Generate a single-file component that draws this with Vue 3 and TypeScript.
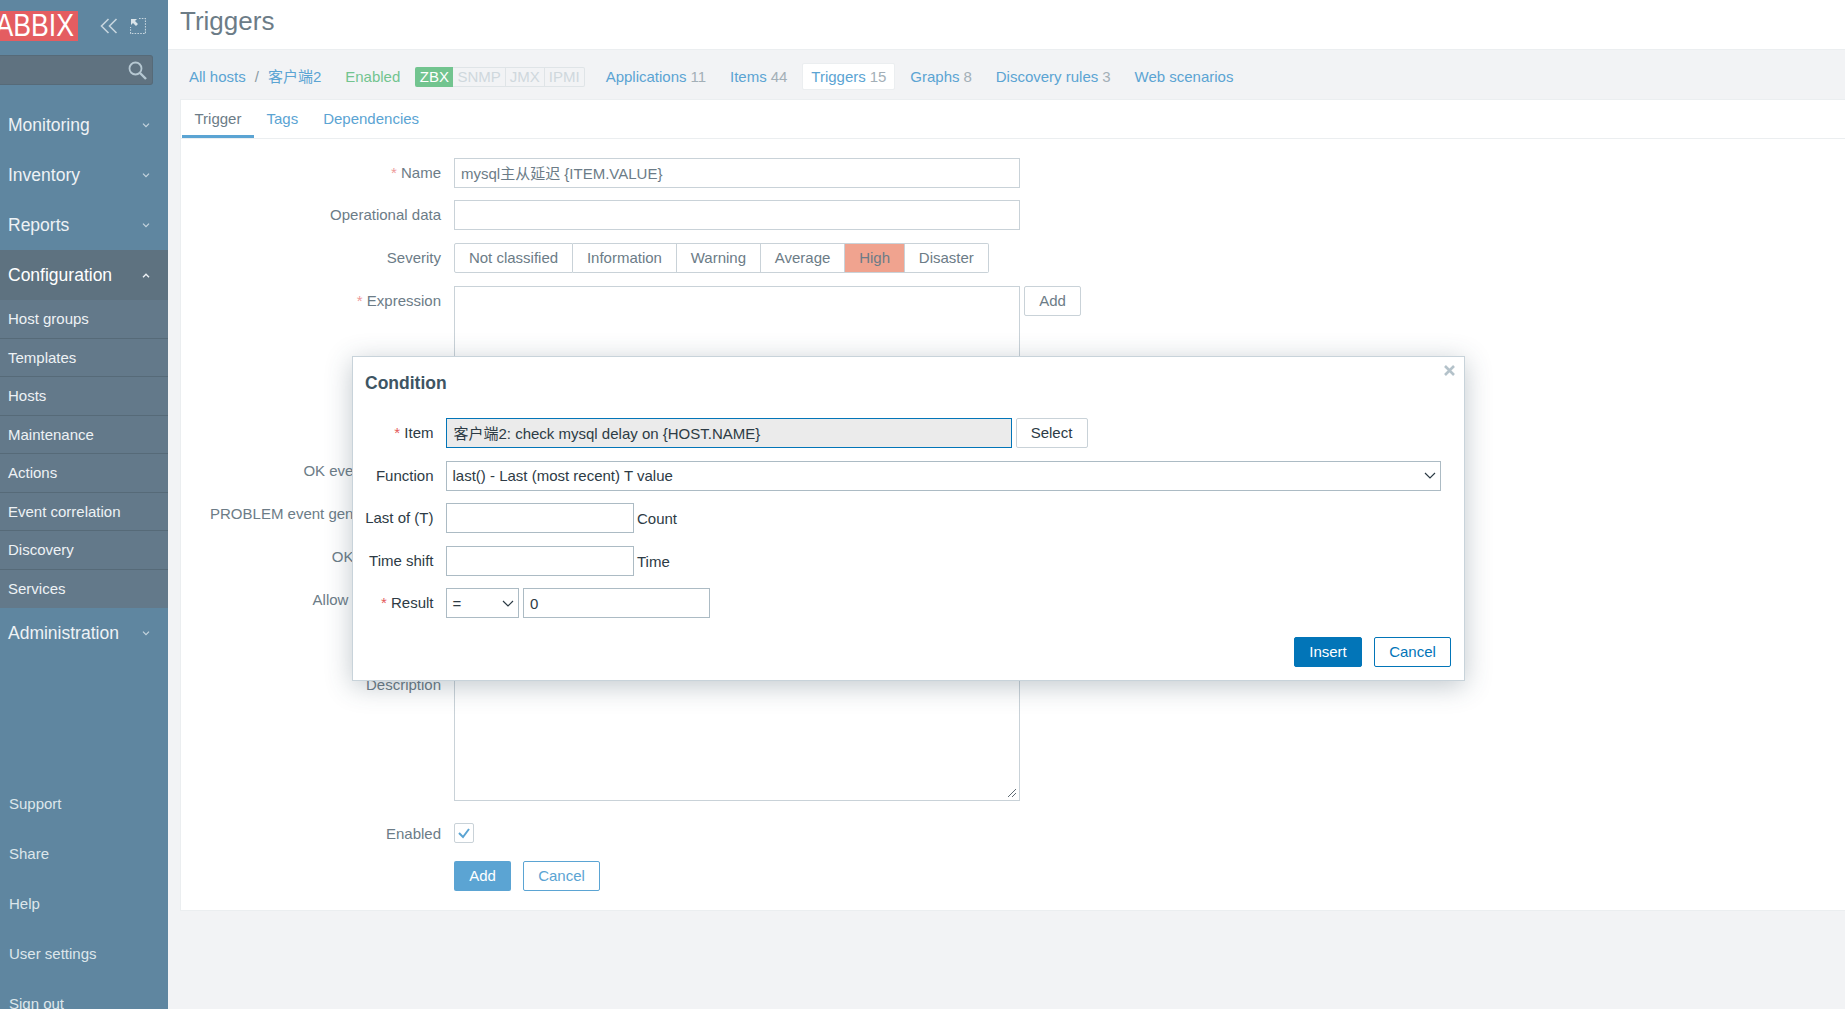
<script setup lang="ts">
const mainMenu = ['Monitoring', 'Inventory', 'Reports']
const subMenu = ['Host groups', 'Templates', 'Hosts', 'Maintenance', 'Actions', 'Event correlation', 'Discovery', 'Services']
const bottomMenu = ['Support', 'Share', 'Help', 'User settings', 'Sign out']
const hostNav = [
  { name: 'Applications', count: '11', active: false },
  { name: 'Items', count: '44', active: false },
  { name: 'Triggers', count: '15', active: true },
  { name: 'Graphs', count: '8', active: false },
  { name: 'Discovery rules', count: '3', active: false },
  { name: 'Web scenarios', count: '', active: false },
]
const severities = ['Not classified', 'Information', 'Warning', 'Average', 'High', 'Disaster']
</script>

<template>
  <div class="page">
    <aside class="sidebar">
      <div class="brand">
        <div class="logo"><span class="logo-text">ZABBIX</span></div>
        <svg class="collapse" width="18" height="16" viewBox="0 0 18 16" fill="none" stroke="#c6d5de" stroke-width="1.6">
          <path d="M8.5 1 1.5 8l7 7M16.5 1l-7 7 7 7" />
        </svg>
        <svg class="expand" width="16" height="16" viewBox="0 0 16 16" fill="none" stroke="#c6d5de">
          <path d="M9 .5h6.5V15.500H.5V9" stroke-dasharray="1.600 1.200" stroke-width="1.200" />
          <path d="M1 1h6L5 3l3 3-2 2-3-3-2 2z" fill="#dbe5ea" stroke="none" />
        </svg>
      </div>
      <div class="search">
        <svg width="19" height="19" viewBox="0 0 19 19" fill="none" stroke="#b6c8d2">
          <circle cx="7.500" cy="7.500" r="6" stroke-width="1.800" />
          <path d="m12 12 6 6" stroke-width="2.400" />
        </svg>
      </div>
      <nav class="menu">
        <div v-for="m in mainMenu" :key="m" class="menu-item">
          <span>{{ m }}</span>
          <svg class="chev" width="8" height="5" viewBox="0 0 8 5" fill="none" stroke="#c6d5de" stroke-width="1.200"><path d="m1 .7 3 3 3-3" /></svg>
        </div>
        <div class="menu-item open">
          <span>Configuration</span>
          <svg class="chev" width="8" height="5" viewBox="0 0 8 5" fill="none" stroke="#eef2f5" stroke-width="1.400"><path d="m1 4.300 3-3 3 3" /></svg>
        </div>
        <div class="submenu">
          <div v-for="s in subMenu" :key="s" class="sub-item">{{ s }}</div>
        </div>
        <div class="menu-item">
          <span>Administration</span>
          <svg class="chev" width="8" height="5" viewBox="0 0 8 5" fill="none" stroke="#c6d5de" stroke-width="1.200"><path d="m1 .7 3 3 3-3" /></svg>
        </div>
      </nav>
      <div class="bottom">
        <div v-for="b in bottomMenu" :key="b" class="bottom-item">{{ b }}</div>
      </div>
    </aside>

    <main class="main">
      <header class="title-bar"><h1>Triggers</h1></header>
      <div class="host-bar">
        <span class="link crumb">All hosts</span>
        <span class="slash">/</span>
        <span class="link host">客户端2</span>
        <span class="enabled">Enabled</span>
        <div class="badges">
          <span class="badge on">ZBX</span>
          <span class="badge">SNMP</span>
          <span class="badge">JMX</span>
          <span class="badge">IPMI</span>
        </div>
        <div class="host-nav">
          <span v-for="n in hostNav" :key="n.name" class="host-link" :class="{ active: n.active }">
            <span class="link">{{ n.name }}</span><span v-if="n.count" class="count">{{ n.count }}</span>
          </span>
        </div>
      </div>

      <section class="card">
        <div class="tabs">
          <span class="tab active">Trigger</span>
          <span class="tab">Tags</span>
          <span class="tab">Dependencies</span>
        </div>
        <div class="form">
          <div class="row">
            <label class="label"><i>*</i> Name</label>
            <div class="field wide">mysql主从延迟 {ITEM.VALUE}</div>
          </div>
          <div class="row">
            <label class="label">Operational data</label>
            <div class="field wide"></div>
          </div>
          <div class="row">
            <label class="label">Severity</label>
            <div class="segmented">
              <span v-for="s in severities" :key="s" class="seg" :class="{ high: s === 'High' }">{{ s }}</span>
            </div>
          </div>
          <div class="row expr">
            <label class="label"><i>*</i> Expression</label>
            <div class="field wide tall"></div>
            <span class="btn-plain add-expr">Add</span>
          </div>
          <div class="row gen"><label class="label">OK event generation</label></div>
          <div class="row gen"><label class="label">PROBLEM event generation mode</label></div>
          <div class="row gen"><label class="label">OK event closes</label></div>
          <div class="row gen"><label class="label">Allow manual close</label></div>
          <div class="row desc">
            <label class="label">Description</label>
            <div class="field wide area">
              <svg class="grip" width="10" height="10" viewBox="0 0 10 10" stroke="#5f6b73" fill="none"><path d="m1 9 8-8M5 9l4-4" /></svg>
            </div>
          </div>
          <div class="row check-row">
            <label class="label">Enabled</label>
            <div class="checkbox">
              <svg width="14" height="12" viewBox="0 0 14 12" fill="none" stroke="#5ba4d3" stroke-width="2"><path d="m2 6 4 4 6-8" /></svg>
            </div>
          </div>
          <div class="row actions">
            <span class="label"></span>
            <span class="btn-fill">Add</span>
            <span class="btn-line">Cancel</span>
          </div>
        </div>
      </section>
    </main>

    <div class="dialog">
      <svg class="close" width="11" height="11" viewBox="0 0 11 11" stroke="#b4c2ca" stroke-width="2.600"><path d="m1 1 9 9M10 1l-9 9" /></svg>
      <h2>Condition</h2>
      <div class="d-row">
        <label class="d-label"><i>*</i> Item</label>
        <div class="d-field item">客户端2: check mysql delay on {HOST.NAME}</div>
        <span class="d-btn">Select</span>
      </div>
      <div class="d-row">
        <label class="d-label">Function</label>
        <div class="d-field func">
          <span>last() - Last (most recent) T value</span>
          <svg width="12" height="7" viewBox="0 0 12 7" fill="none" stroke="#2b3a44" stroke-width="1.200"><path d="m1 1 5 5 5-5" /></svg>
        </div>
      </div>
      <div class="d-row">
        <label class="d-label">Last of (T)</label>
        <div class="d-field short"></div>
        <span class="unit">Count</span>
      </div>
      <div class="d-row">
        <label class="d-label">Time shift</label>
        <div class="d-field short"></div>
        <span class="unit">Time</span>
      </div>
      <div class="d-row">
        <label class="d-label"><i>*</i> Result</label>
        <div class="d-field op">
          <span>=</span>
          <svg width="12" height="7" viewBox="0 0 12 7" fill="none" stroke="#2b3a44" stroke-width="1.200"><path d="m1 1 5 5 5-5" /></svg>
        </div>
        <div class="d-field value">0</div>
      </div>
      <div class="d-actions">
        <span class="d-insert">Insert</span>
        <span class="d-cancel">Cancel</span>
      </div>
    </div>
  </div>
</template>

<style>
html, body { margin: 0; overflow: hidden; }
</style>

<style scoped>
.page {
  position: relative;
  display: flex;
  height: 1009px;
  overflow: hidden;
  background: #f2f3f5;
  font: 15px/18px "Liberation Sans", "Noto Sans CJK SC", Arial, sans-serif;
  color: #6c7c87;
}
.sidebar {
  flex: 0 0 168px;
  width: 168px;
  height: 1009px;
  overflow: hidden;
  background: #5f86a0;
  color: #e6edf1;
}
.brand {
  display: flex;
  align-items: center;
  height: 55px;
  padding-bottom: 10px;
  box-sizing: border-box;
  padding-top: 7px;
}
.logo {
  flex: 0 0 78px;
  height: 30px;
  overflow: hidden;
  display: flex;
  justify-content: flex-end;
  align-items: center;
  background: #e45d61;
}
.logo-text {
  flex: none;
  color: #fff;
  font-size: 31px;
  line-height: 30px;
  transform: scaleX(.86);
  transform-origin: right center;
  padding-right: 5px;
}
.collapse { margin-left: 22px; }
.expand { margin-left: 12px; }
.search {
  display: flex;
  align-items: center;
  justify-content: flex-end;
  width: 153px;
  height: 30px;
  box-sizing: border-box;
  padding-right: 5px;
  background: #5f7280;
  border: 1px solid #566a78;
  border-left: 0;
  border-radius: 0 3px 3px 0;
}
.menu { margin-top: 15px; }
.menu-item {
  display: flex;
  align-items: center;
  justify-content: space-between;
  height: 50px;
  padding: 0 18px 0 8px;
  font-size: 17.500px;
  color: #eef2f5;
}
.menu-item.open { background: #5e7280; color: #fff; }
.submenu { background: #63798a; }
.sub-item {
  display: flex;
  align-items: center;
  height: 38.500px;
  box-sizing: border-box;
  padding: 1px 0 0 8px;
  border-bottom: 1px solid #566a78;
  color: #eef2f5;
}
.sub-item:last-child { border-bottom: 0; }
.bottom { margin-top: 121px; }
.bottom-item {
  display: flex;
  align-items: center;
  height: 50px;
  padding-left: 9px;
  color: #dde6eb;
}

.main { flex: 1; min-width: 0; }
.title-bar {
  height: 50px;
  box-sizing: border-box;
  background: #fff;
  border-bottom: 1px solid #ebeef0;
  padding-left: 12px;
}
h1 {
  margin: 0;
  font-size: 26px;
  line-height: 42px;
  font-weight: 400;
  color: #6c7c87;
}
.host-bar {
  display: flex;
  align-items: center;
  height: 49px;
  box-sizing: border-box;
  padding: 4px 0 0 21px;
}
.link { color: #5ba4d3; }
.crumb { margin-top: 1px; }
.slash { margin: 0 9px 0 9px; color: #8b9aa3; }
.host { margin-top: 1px; }
.enabled { margin-left: 24px; color: #72c48f; }
.badges {
  display: flex;
  height: 20px;
  margin-left: 15px;
  border: 1px solid #dfe4e7;
  border-left: 0;
  border-radius: 2px;
  box-sizing: border-box;
}
.badge {
  padding: 0 4px;
  line-height: 18px;
  color: #cfd8dd;
  border-right: 1px solid #dfe4e7;
}
.badge:last-child { border-right: 0; }
.badge.on {
  margin: -1px 0;
  padding: 1px 4.500px;
  background: #72c48f;
  color: #fff;
  border: 0;
  border-radius: 2px 0 0 2px;
}
.host-nav {
  display: flex;
  align-items: center;
  margin-left: 12px;
  gap: 5.900px;
}
.host-link {
  display: inline-flex;
  align-items: center;
  gap: 4px;
  height: 27px;
  box-sizing: border-box;
  padding: 0 8px;
  white-space: nowrap;
  border: 1px solid transparent;
  border-radius: 2px;
}
.host-link.active { background: #fff; border-color: #ebeef0; }
.count { color: #a3afb7; }

.card {
  height: 812px;
  box-sizing: border-box;
  background: #fff;
  border: 1px solid #ebeef0;
  border-right: 0;
  margin-left: 12px;
}
.tabs {
  display: flex;
  height: 39px;
  box-sizing: border-box;
  padding-left: 1px;
  border-bottom: 1px solid #ebeef0;
}
.tab {
  height: 38px;
  box-sizing: border-box;
  padding: 10px 12.500px 0;
  color: #5ba4d3;
}
.tab.active { color: #6c7c87; border-bottom: 3px solid #5ba4d3; }
.form { padding-top: 19px; }
.row {
  display: flex;
  align-items: center;
  height: 30px;
  margin-bottom: 13px;
}
.row:first-child { margin-bottom: 12px; }
.label {
  flex: 0 0 260px;
  width: 260px;
  text-align: right;
  white-space: nowrap;
  direction: rtl;
  unicode-bidi: plaintext;
  margin-right: 13px;
}
.label i { font-style: normal; color: #ee9a9a; }
.field {
  box-sizing: border-box;
  height: 30px;
  padding: 0 6px;
  line-height: 29px;
  border: 1px solid #c9d2d8;
  background: #fff;
  color: #6c7c87;
}
.wide { width: 566px; flex: none; }
.segmented { display: flex; height: 30px; }
.seg {
  padding: 0 13.900px;
  line-height: 28px;
  border: 1px solid #c9d2d8;
  border-left: 0;
  box-sizing: border-box;
}
.seg:first-child { border-left: 1px solid #c9d2d8; border-radius: 2px 0 0 2px; }
.seg:last-child { border-radius: 0 2px 2px 0; }
.seg.high { background: #f0a38f; }
.row.expr { align-items: flex-start; height: 160px; margin-bottom: 10px; }
.row.expr .label { margin-top: 6px; }
.tall { height: 160px; }
.btn-plain {
  margin-left: 4px;
  width: 57px;
  height: 30px;
  box-sizing: border-box;
  text-align: center;
  line-height: 28px;
  border: 1px solid #c9d2d8;
  border-radius: 2px;
}
.row.desc { align-items: flex-start; height: 131px; margin-top: 55px; margin-bottom: 22px; }
.row.desc .label { margin-top: 6px; }
.area { position: relative; height: 131px; }
.grip { position: absolute; right: 2px; bottom: 2px; }
.check-row { height: 20px; margin-bottom: 18px; }
.check-row .label { padding-top: 1px; }
.checkbox {
  display: flex;
  align-items: center;
  justify-content: center;
  width: 20px;
  height: 20px;
  box-sizing: border-box;
  border: 1px solid #c9d2d8;
  border-radius: 2px;
}
.actions .btn-fill {
  width: 57px;
  height: 30px;
  line-height: 30px;
  text-align: center;
  background: #5ba4d3;
  color: #fff;
  border-radius: 2px;
}
.actions .btn-line {
  width: 77px;
  height: 30px;
  box-sizing: border-box;
  margin-left: 12px;
  line-height: 28px;
  text-align: center;
  color: #5ba4d3;
  border: 1px solid #5ba4d3;
  border-radius: 2px;
}

.dialog {
  position: absolute;
  left: 352px;
  top: 356px;
  width: 1113px;
  height: 325px;
  box-sizing: border-box;
  padding: 0 13px 0 12px;
  background: #fff;
  border: 1px solid #c8d3da;
  box-shadow: 0 5px 25px rgba(50, 72, 88, .3);
  color: #2d3b45;
}
.close { position: absolute; top: 8px; right: 9px; }
h2 {
  margin: 0;
  padding-top: 17px;
  height: 61px;
  box-sizing: border-box;
  font-size: 17.500px;
  line-height: 18px;
  font-weight: 700;
  color: #3e5563;
}
.d-row {
  display: flex;
  align-items: center;
  height: 30px;
  margin-bottom: 12.500px;
}
.d-label {
  flex: 0 0 68.500px;
  text-align: right;
  white-space: nowrap;
  margin-right: 12px;
}
.d-label i { font-style: normal; color: #e45959; }
.d-field {
  box-sizing: border-box;
  height: 30px;
  padding: 0 7px;
  line-height: 29px;
  border: 1px solid #acbbc4;
  background: #fff;
}
.item { width: 566px; background: #ebebeb; border-color: #0275b8; }
.d-btn {
  width: 72px;
  height: 30px;
  margin-left: 4px;
  box-sizing: border-box;
  line-height: 28px;
  text-align: center;
  border: 1px solid #c9d2d8;
  border-radius: 2px;
}
.func, .op {
  display: flex;
  align-items: center;
  justify-content: space-between;
  padding-right: 4px;
}
.func { width: 995px; padding-left: 6px; }
.op { width: 73px; padding-left: 6px; }
.short { width: 188px; }
.unit { margin-left: 3.500px; margin-top: 2px; }
.value { width: 187px; margin-left: 4px; padding-left: 6.500px; }
.d-actions {
  display: flex;
  justify-content: flex-end;
  gap: 12px;
  margin-top: 19px;
}
.d-insert, .d-cancel {
  height: 30px;
  box-sizing: border-box;
  line-height: 28px;
  text-align: center;
  border: 1px solid #0275b8;
  border-radius: 2px;
}
.d-insert { width: 68px; background: #0275b8; color: #fff; }
.d-cancel { width: 77px; color: #0275b8; }
</style>
